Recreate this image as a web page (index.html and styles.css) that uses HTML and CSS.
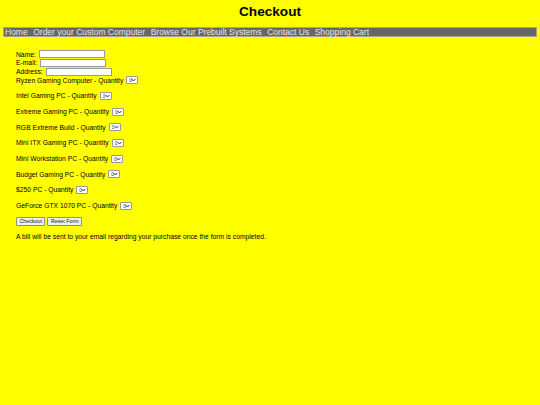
FILE: index.html
```html
<!DOCTYPE html>
<html lang="en">
<head>
  <meta charset="UTF-8" />
  <title>Checkout</title>
  <link rel="stylesheet" href="styles.css">
</head>
<body>
  <h1>Checkout</h1>
  <nav class="menu">
    <a href="#">Home</a>
    <a href="#">Order your Custom Computer</a>
    <a href="#">Browse Our Prebuilt Systems</a>
    <a href="#">Contact Us</a>
    <a href="#">Shopping Cart</a>
  </nav>

  <form class="order">
    <div class="line">Name: <input type="text" name="name"></div>
    <div class="line">E-mail: <input type="email" name="email"></div>
    <div class="line">Address: <input type="text" name="address"></div>
    <div class="line">Ryzen Gaming Computer - Quantity <select><option>0</option><option>1</option></select></div>

    <div class="item">Intel Gaming PC - Quantity <select><option>0</option><option>1</option></select></div>
    <div class="item">Extreme Gaming PC - Quantity <select><option>0</option><option>1</option></select></div>
    <div class="item">RGB Extreme Build - Quantity <select><option>0</option><option>1</option></select></div>
    <div class="item">Mini ITX Gaming PC - Quantity <select><option>0</option><option>1</option></select></div>
    <div class="item">Mini Workstation PC - Quantity <select><option>0</option><option>1</option></select></div>
    <div class="item">Budget Gaming PC - Quantity <select><option>0</option><option>1</option></select></div>
    <div class="item">$250 PC - Quantity <select><option>0</option><option>1</option></select></div>
    <div class="item">GeForce GTX 1070 PC - Quantity <select><option>0</option><option>1</option></select></div>

    <div class="item buttons">
      <button type="submit">Checkout</button>
      <button type="reset">Reset Form</button>
    </div>
    <div class="item">A bill will be sent to your email regarding your purchase once the form is completed.</div>
  </form>
</body>
</html>
```

FILE: styles.css
```css
body {
  font-family: "Liberation Sans", Arial, sans-serif;
  background-color: #ffff00;
  color: #000;
  margin: 0;
  padding: 4px 3px;
}
h1 {
  font-size: 13.6px;
  text-align: center;
  margin: 0 0 8px;
  line-height: 15px;
}
.menu {
  background-color: #666666;
  border: 1px solid #a8a890;
  height: 8px;
  padding: 0 1px;
  display: flex;
  align-items: center;
  gap: 5.5px;
  font-size: 8.5px;
}
.menu a {
  color: #e6e6e6;
  text-decoration: none;
}
.order {
  padding: 13px 0 0 13px;
  display: flex;
  flex-direction: column;
  font-size: 6.75px;
}
.line, .item {
  height: 8.67px;
  display: flex;
  align-items: center;
  white-space: pre;
}
.item {
  margin-top: 7px;
}
input {
  width: 66px;
  height: 8px;
  box-sizing: border-box;
  border: 1px solid #9a9a9a;
  background: #fff;
  padding: 0;
  margin: 0;
  margin-left: 1px;
}
select {
  appearance: none;
  -webkit-appearance: none;
  font-family: inherit;
  font-size: 5px;
  color: #333;
  height: 8px;
  width: 12px;
  box-sizing: border-box;
  padding: 0 0 0 2px;
  margin: 0;
  margin-left: 1px;
  border: 1px solid #9a9a9a;
  border-radius: 1px;
  background: #fff url("data:image/svg+xml,%3Csvg xmlns='http://www.w3.org/2000/svg' width='5' height='4' viewBox='0 0 5 4'%3E%3Cpath d='M0.6 1 L2.5 3 L4.4 1' fill='none' stroke='%23333' stroke-width='1'/%3E%3C/svg%3E") no-repeat right 1px center;
}
.buttons {
  gap: 2px;
}
button {
  font-family: inherit;
  font-size: 5.3px;
  height: 9px;
  padding: 0 2.5px;
  margin: 0;
  background-color: #efefef;
  border: 1px solid #8f8f8f;
  border-radius: 1px;
  color: #222;
  line-height: 1;
}
```
